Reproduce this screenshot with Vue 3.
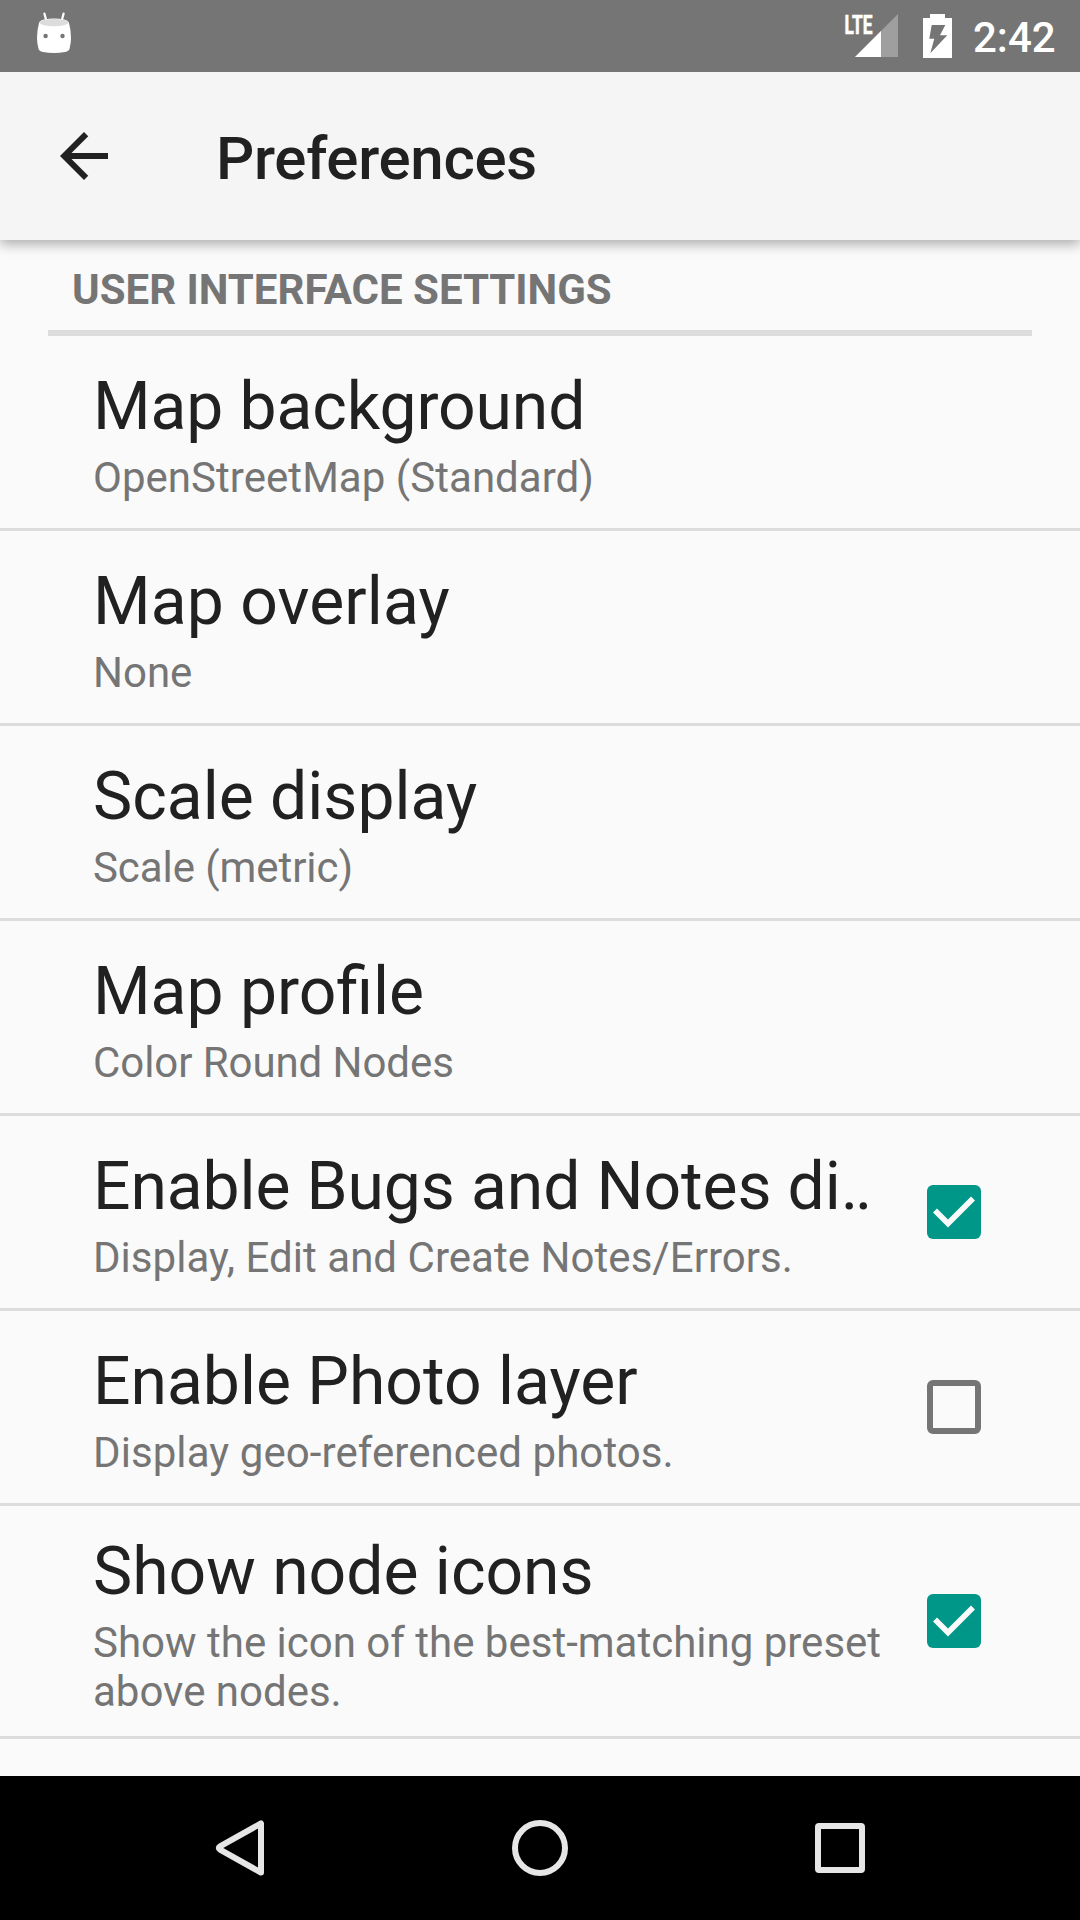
<script setup>
const items = [
  { title: 'Map background', summary: 'OpenStreetMap (Standard)' },
  { title: 'Map overlay', summary: 'None' },
  { title: 'Scale display', summary: 'Scale (metric)' },
  { title: 'Map profile', summary: 'Color Round Nodes' },
  { title: 'Enable Bugs and Notes di‥', summary: 'Display, Edit and Create Notes/Errors.', checked: true },
  { title: 'Enable Photo layer', summary: 'Display geo-referenced photos.', checked: false },
  { title: 'Show node icons', summary: 'Show the icon of the best-matching preset above nodes.', checked: true, tall: true },
]
</script>

<template>
  <div class="screen">
    <header class="status">
      <svg class="marshmallow" width="34" height="42" viewBox="0 0 34 42">
        <path d="M7.4 1.6 9.4 9M26.6 1.6 24.6 9" stroke="#fff" stroke-width="2.2" stroke-linecap="round" />
        <path d="M2 11Q3 8 7 7.4Q17 5.6 27 7.4Q31 8 32 11Q34 18 34 26Q34 31 32.6 36.5Q32 39 28 40Q17 42 6 40Q2 39 1.4 36.5Q0 31 0 26Q0 18 2 11Z" fill="#fff" />
        <ellipse cx="17" cy="10.6" rx="14.4" ry="3.6" fill="#dcdcdc" />
        <circle cx="8.6" cy="24" r="2.2" fill="#757575" />
        <circle cx="25.5" cy="24" r="2.2" fill="#757575" />
      </svg>
      <div class="status-right">
        <svg class="signal" width="64" height="52" viewBox="-10 -6 64 52">
          <path d="M10 45H53V2Z" fill="#9f9f9f" />
          <path d="M10 45H36V19Z" fill="#fff" />
          <text x="-.4" y="21.6" textLength="28" lengthAdjust="spacingAndGlyphs">LTE</text>
        </svg>
        <svg class="battery" width="29" height="44" viewBox="0 0 29 44">
          <path fill="#fff" fill-rule="evenodd" d="M7 0H22V4H29V44H0V4H7ZM8.7 11 6.3 24.7H11.3L7.3 39.3 24.3 21.3H17L22.3 11Z" />
        </svg>
        <span class="time">2:42</span>
      </div>
    </header>

    <div class="toolbar">
      <svg width="72" height="72" viewBox="0 0 24 24">
        <path fill="#212121" d="M20 11H7.83l5.59-5.59L12 4l-8 8 8 8 1.41-1.41L7.83 13H20v-2z" />
      </svg>
      <h1>Preferences</h1>
    </div>

    <main>
      <h2>USER INTERFACE SETTINGS</h2>
      <ul>
        <li v-for="item in items" :key="item.title" :class="{ tall: item.tall }">
          <div class="text">
            <div class="title">{{ item.title }}</div>
            <div class="summary">{{ item.summary }}</div>
          </div>
          <span v-if="item.checked !== undefined" class="box" :class="{ on: item.checked }">
            <svg v-if="item.checked" width="54" height="54" viewBox="0 0 54 54">
              <path d="M8 25.5 21 38.5 46 13.5" fill="none" stroke="#fafafa" stroke-width="5.6" />
            </svg>
          </span>
        </li>
      </ul>
    </main>

    <nav>
      <svg width="56" height="56" viewBox="0 0 56 56">
        <path d="M49 3.4V52.6L8 29.6Q5.6 28 8 26.4Z" class="line" />
      </svg>
      <svg width="56" height="56" viewBox="0 0 56 56">
        <circle cx="28" cy="28" r="25" class="line" />
      </svg>
      <svg width="56" height="56" viewBox="0 0 56 56">
        <rect x="6" y="6" width="44" height="44" rx="1" class="line" />
      </svg>
    </nav>
  </div>
</template>

<style>
body { margin: 0; background: #fafafa; }
</style>

<style scoped>
.screen {
  width: 1080px;
  height: 1920px;
  display: flex;
  flex-direction: column;
  overflow: hidden;
  background: #fafafa;
  color: #212121;
  font-family: Roboto, "Liberation Sans", sans-serif;
}
.status {
  flex: none;
  position: relative;
  z-index: 2;
  height: 72px;
  display: flex;
  align-items: flex-start;
  justify-content: space-between;
  background: #757575;
}
.marshmallow { margin: 12px 0 0 37px; }
.status-right { display: flex; align-items: flex-start; padding-right: 24px; }
.signal { margin-top: 6px; }
.signal text { font: 700 26.7px Roboto, sans-serif; fill: #fff; stroke: #fff; stroke-width: .6; }
.battery { margin: 14px 21px 0 24px; }
.time { width: 83px; margin-top: 13px; font-size: 42px; font-weight: 500; line-height: 50px; color: #fff; white-space: nowrap; }
.toolbar {
  flex: none;
  position: relative;
  z-index: 1;
  height: 168px;
  display: flex;
  align-items: center;
  padding-left: 48px;
  background: #f5f5f5;
  box-shadow: 0 4px 12px rgba(0, 0, 0, .32);
}
.toolbar h1 { margin: 5px 0 0 96px; font-size: 60px; font-weight: 500; line-height: 71px; letter-spacing: -.31px; }
main { flex: 1; min-height: 0; }
h2 {
  box-sizing: border-box;
  height: 96px;
  margin: 0 48px;
  padding: 25px 24px 0;
  border-bottom: 6px solid #dcdcdc;
  font-size: 42px;
  font-weight: 700;
  line-height: 49px;
  color: #757575;
}
ul { margin: 0; padding: 0; list-style: none; }
li {
  height: 192px;
  display: flex;
  align-items: center;
  padding: 0 99px 0 93px;
  border-bottom: 3px solid #dcdcdc;
}
li.tall { height: 230px; }
.text { flex: 1; align-self: stretch; padding-top: 32px; }
.tall .text { padding-top: 27px; }
.title { font-size: 66px; line-height: 78px; white-space: nowrap; }
.summary { margin-top: 7px; width: 800px; font-size: 42px; line-height: 49px; color: #757575; }
li:nth-child(1) .title { letter-spacing: -.1px; }
li:nth-child(2) .title { letter-spacing: .1px; }
li:nth-child(5) .title { letter-spacing: -.11px; }
li:nth-child(1) .summary, li:nth-child(5) .summary { letter-spacing: .04px; }
li:nth-child(3) .summary, li:nth-child(4) .summary { letter-spacing: -.07px; }
li:nth-child(6) .summary { letter-spacing: .08px; }
.box {
  flex: none;
  box-sizing: border-box;
  width: 54px;
  height: 54px;
  border: 6px solid #757575;
  border-radius: 6px;
}
.box.on { border: 0; background: #009688; }
.box svg { display: block; }
nav {
  flex: none;
  height: 144px;
  display: flex;
  align-items: center;
  justify-content: center;
  gap: 244px;
  background: #000;
}
.line { fill: none; stroke: #e6e6e6; stroke-width: 6; stroke-linejoin: round; }
</style>
